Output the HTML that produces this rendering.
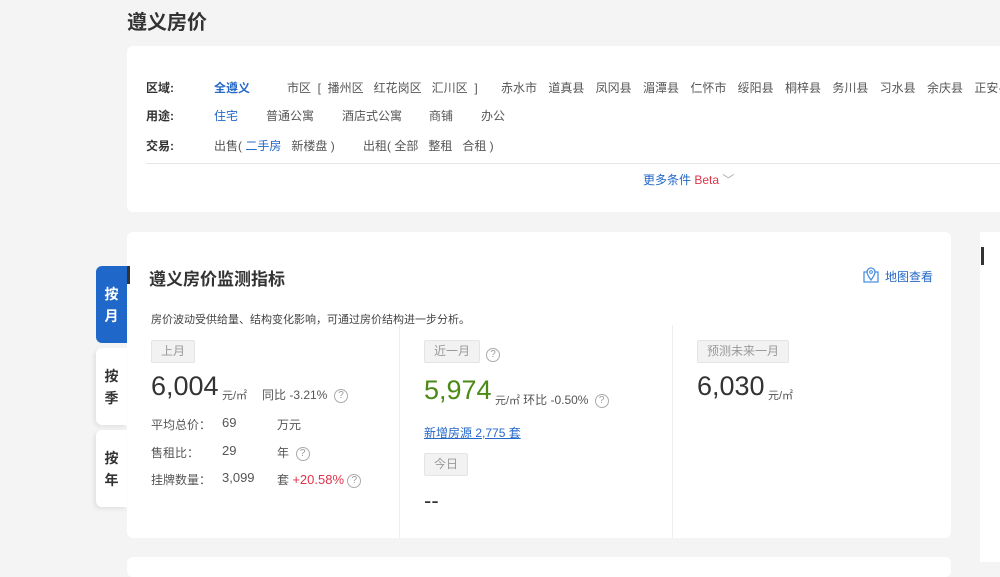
<!DOCTYPE html>
<html><head><meta charset="utf-8"><style>
*{margin:0;padding:0;box-sizing:border-box}
body{width:1000px;height:562px;overflow:hidden;background:#f4f4f4;font-family:"Liberation Sans","Noto Sans CJK SC",sans-serif;position:relative;color:#333}
.a{position:absolute;white-space:nowrap}
.card{position:absolute;background:#fff;border-radius:6px}
.lab{font-size:12px;color:#333;font-weight:bold}
.g{color:#555;font-size:12px}
.b{color:#2468c8;font-size:12px}
.tag{position:absolute;background:#f2f2f2;border:1px solid #e4e4e4;color:#999;font-size:12px;height:23px;line-height:21px;padding:0 9px;border-radius:2px}
.q{display:inline-block;width:14px;height:14px;border:1px solid #aaa;border-radius:50%;font-size:10px;line-height:12px;text-align:center;color:#999;vertical-align:middle}
.big{font-size:27px;color:#333}
.u{font-size:11px;color:#555}
.tab{position:absolute;left:96px;width:31px;height:77px;border-radius:6px 0 0 6px;background:#fff;font-size:14px;font-weight:bold;text-align:center;line-height:22px;padding-top:17px;color:#333;box-shadow:-2px 2px 4px rgba(0,0,0,.08)}
</style></head><body>
<div class="a" style="left:127px;top:6px;font-size:20px;font-weight:bold;color:#333">遵义房价</div>
<div class="card" style="left:127px;top:46px;width:880px;height:166px"></div>
<div class="a lab" style="left:146px;top:79px">区域:</div>
<div class="a b" style="left:214px;top:79px;font-weight:bold">全遵义</div>
<div class="a g" style="left:287px;top:79px">市区 &nbsp;[ &nbsp;播州区 &nbsp; 红花岗区 &nbsp; 汇川区 &nbsp;]</div>
<div class="a g" style="left:501px;top:79px;word-spacing:8px">赤水市 道真县 凤冈县 湄潭县 仁怀市 绥阳县 桐梓县 务川县 习水县 余庆县 正安县</div>
<div class="a lab" style="left:146px;top:107px">用途:</div>
<div class="a b" style="left:214px;top:107px">住宅</div>
<div class="a g" style="left:266px;top:107px">普通公寓</div>
<div class="a g" style="left:342px;top:107px">酒店式公寓</div>
<div class="a g" style="left:429px;top:107px">商铺</div>
<div class="a g" style="left:481px;top:107px">办公</div>
<div class="a lab" style="left:146px;top:137px">交易:</div>
<div class="a g" style="left:214px;top:137px">出售( <span class="b">二手房</span> &nbsp; 新楼盘 )</div>
<div class="a g" style="left:363px;top:137px">出租( 全部 &nbsp; 整租 &nbsp; 合租 )</div>
<div class="a" style="left:146px;top:163px;width:854px;height:1px;background:#e6e6e6"></div>
<div class="a b" style="left:643px;top:171px">更多条件 <span style="color:#e0334a">Beta</span> <span style="color:#aaa">﹀</span></div>

<div class="card" style="left:127px;top:232px;width:824px;height:306px"></div>
<div class="tab" style="top:266px;background:#1f67c9;color:#fff;box-shadow:none">按<br>月</div>
<div class="tab" style="top:348px">按<br>季</div>
<div class="tab" style="top:430px">按<br>年</div>
<div class="a" style="left:127px;top:266px;width:3px;height:18px;background:#333"></div>
<div class="a" style="left:149px;top:265px;font-size:17px;font-weight:bold;color:#333">遵义房价监测指标</div>
<svg class="a" style="left:862px;top:266px" width="18" height="17" viewBox="0 0 18 17"><path d="M5 6H2v10h14V6h-3" fill="none" stroke="#4a90e2" stroke-width="1.3"/><path d="M9 14C6 10 5 8 5 6a4 4 0 0 1 8 0c0 2-1 4-4 8z" fill="#fff" stroke="#4a90e2" stroke-width="1.3"/><circle cx="9" cy="6" r="1.4" fill="none" stroke="#4a90e2"/></svg>
<div class="a b" style="left:885px;top:268px">地图查看</div>
<div class="a" style="left:151px;top:311px;font-size:11px;color:#444">房价波动受供给量、结构变化影响，可通过房价结构进一步分析。</div>
<div class="a" style="left:399px;top:325px;width:1px;height:213px;background:#eee"></div>
<div class="a" style="left:672px;top:325px;width:1px;height:213px;background:#eee"></div>

<div class="tag" style="left:151px;top:340px">上月</div>
<div class="a big" style="left:151px;top:371px">6,004</div>
<div class="a u" style="left:222px;top:387px">元/㎡</div>
<div class="a g" style="left:262px;top:386px">同比 -3.21% &nbsp;<span class="q">?</span></div>
<div class="a g" style="left:151px;top:416px">平均总价：</div><div class="a g" style="left:222px;top:415px;font-size:13px">69</div><div class="a g" style="left:277px;top:416px">万元</div>
<div class="a g" style="left:151px;top:444px">售租比：</div><div class="a g" style="left:222px;top:443px;font-size:13px">29</div><div class="a g" style="left:277px;top:444px">年 &nbsp;<span class="q">?</span></div>
<div class="a g" style="left:151px;top:471px">挂牌数量：</div><div class="a g" style="left:222px;top:470px;font-size:13px">3,099</div><div class="a g" style="left:277px;top:471px">套 <span style="color:#e0334a;font-size:13px">+20.58%</span> <span class="q">?</span></div>

<div class="tag" style="left:424px;top:340px">近一月</div>
<div class="a" style="left:486px;top:346px"><span class="q">?</span></div>
<div class="a big" style="left:424px;top:375px;color:#4c8a16">5,974</div>
<div class="a u" style="left:495px;top:391px">元/㎡ <span style="font-size:12px">环比 -0.50%</span> &nbsp;<span class="q">?</span></div>
<div class="a b" style="left:424px;top:424px;text-decoration:underline">新增房源 2,775 套</div>
<div class="tag" style="left:424px;top:453px">今日</div>
<div class="a" style="left:424px;top:488px;font-size:22px;color:#333">--</div>

<div class="tag" style="left:697px;top:340px">预测未来一月</div>
<div class="a big" style="left:697px;top:371px">6,030</div>
<div class="a u" style="left:768px;top:387px">元/㎡</div>

<div class="card" style="left:980px;top:232px;width:30px;height:330px;border-radius:0"></div>
<div class="a" style="left:981px;top:247px;width:3px;height:18px;background:#333"></div>
<div class="card" style="left:127px;top:557px;width:824px;height:20px"></div>
</body></html>
